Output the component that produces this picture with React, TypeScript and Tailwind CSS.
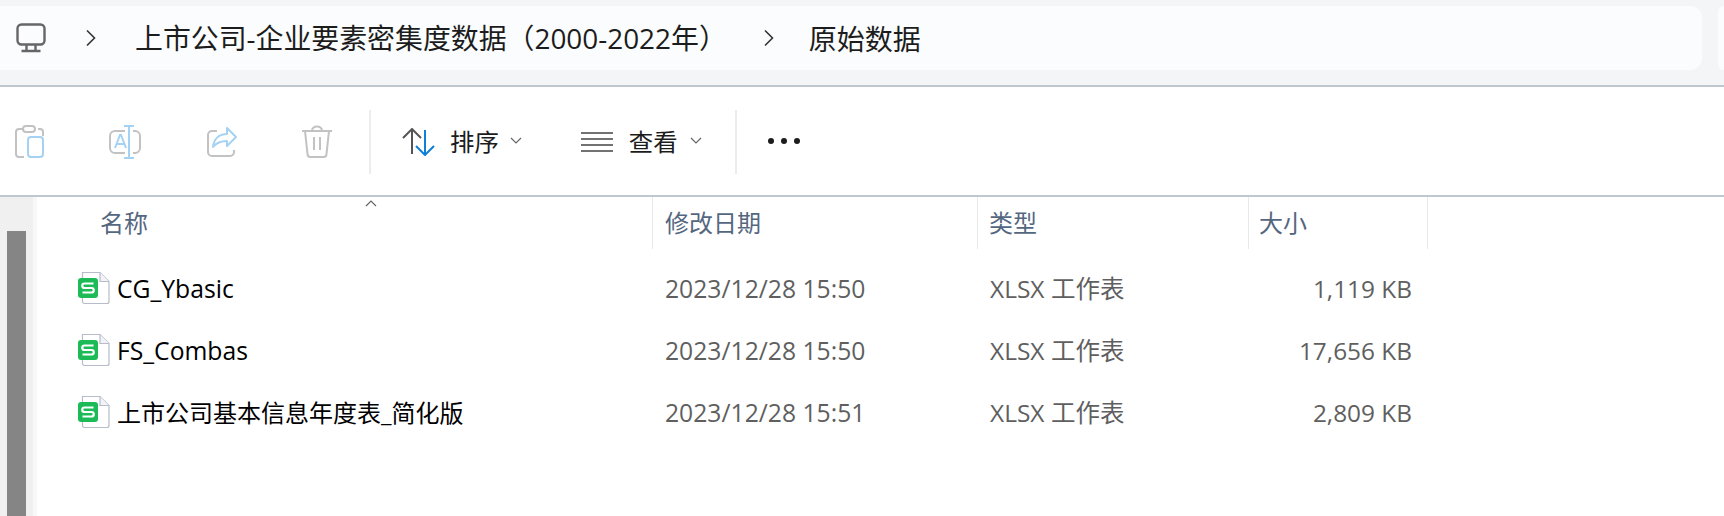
const font = { fontFamily: '"Open Sans", "Noto Sans CJK SC", sans-serif' };

const files = [
  { name: "CG_Ybasic", nameSize: "text-[24.7px]", date: "2023/12/28 15:50", size: "1,119 KB" },
  { name: "FS_Combas", nameSize: "text-[24.7px]", date: "2023/12/28 15:50", size: "17,656 KB" },
  { name: "上市公司基本信息年度表_简化版", nameSize: "text-[24px]", date: "2023/12/28 15:51", size: "2,809 KB" },
];

const Chevron = ({ className }: { className: string }) => (
  <svg viewBox="0 0 12 18" className={className} fill="none" stroke="#333" strokeWidth="1.6">
    <path d="M2 1.5 9.5 9 2 16.5" />
  </svg>
);

const Caret = ({ className }: { className: string }) => (
  <svg viewBox="0 0 12 7" className={className} fill="none" stroke="#666" strokeWidth="1.2">
    <path d="M1 1l5 5 5-5" />
  </svg>
);

const SheetIcon = () => (
  <svg viewBox="0 0 34 34" className="w-[34px] h-[34px] shrink-0 -mt-[2px]">
    <path d="M5.5 1.5H23l9 9v20a2 2 0 0 1-2 2H7.5a2 2 0 0 1-2-2z" fill="#fff" stroke="#b6bcc8" strokeWidth="1.2" />
    <path d="M23 1.5v9h9" fill="#f2f3f6" stroke="#b6bcc8" strokeWidth="1.2" />
    <rect x="1" y="7" width="20" height="20" rx="3" fill="#1dbb58" />
    <path d="M16.5 12.5H7.5a1.8 1.8 0 0 0 0 4.5h7a1.8 1.8 0 0 1 0 4.5H5.5" fill="none" stroke="#fff" strokeWidth="2.2" />
  </svg>
);

export default function App() {
  return (
    <div className="w-[1724px] h-[516px] bg-white overflow-hidden flex flex-col" style={font}>
      <div className="h-[87px] shrink-0 bg-[#f3f5f7] border-b-2 border-[#bfc7cf] pt-[6px] flex gap-[16px]">
        <div className="w-[1702px] shrink-0 h-[64px] bg-[#fbfcfe] rounded-r-xl flex items-center text-[#1c1c1c] text-[27.9px]">
          <svg viewBox="0 0 30 30" className="ml-[16px] w-[30px] h-[30px]" fill="none" stroke="#666" strokeWidth="2.4">
            <rect x="1.5" y="1.5" width="27" height="20" rx="4" />
            <path d="M10.5 22v5M19.5 22v5M5.5 28h19" />
          </svg>
          <Chevron className="ml-[39px] w-[12px] h-[18px]" />
          <span className="ml-[38px] pt-[2px] whitespace-nowrap">上市公司-企业要素密集度数据（2000-2022年）</span>
          <Chevron className="ml-[36px] w-[12px] h-[18px]" />
          <span className="ml-[34px] pt-[2px] text-[28px]">原始数据</span>
        </div>
        <div className="flex-1 h-[64px] bg-[#fbfcfe] rounded-l-xl" />
      </div>

      <div className="h-[110px] shrink-0 border-b-2 border-[#bfc7cf] pt-[2px] flex items-center text-[24px] text-[#1c1c1c]">
        <svg viewBox="0 0 30 34" className="ml-[15px] w-[30px] h-[34px]" fill="none" strokeWidth="2">
          <path d="M9 4H4a3 3 0 0 0-3 3v22a3 3 0 0 0 3 3h5M23 4h2a3 3 0 0 1 3 3v4" stroke="#c2c2c2" />
          <rect x="8" y="1" width="12" height="6" rx="3" stroke="#c2c2c2" />
          <rect x="13" y="12" width="15" height="20" rx="3" stroke="#a5d2f2" />
        </svg>
        <svg viewBox="0 0 34 34" className="ml-[63px] w-[34px] h-[34px]" fill="none" strokeWidth="2">
          <path d="M17 6H7a5 5 0 0 0-5 5v12a5 5 0 0 0 5 5h10M25 6h2a5 5 0 0 1 5 5v12a5 5 0 0 1-5 5h-2" stroke="#c2c2c2" />
          <path d="M7 23l5-13h1l5 13M9 19h8M21 1v32M16 1h10M16 33h10" stroke="#a5d2f2" />
        </svg>
        <svg viewBox="0 0 32 32" className="ml-[64px] w-[32px] h-[32px]" fill="none" strokeWidth="2">
          <path d="M11 5H6a4 4 0 0 0-4 4v17a4 4 0 0 0 4 4h18a4 4 0 0 0 4-4v-2" stroke="#c2c2c2" />
          <path d="M21 2l9 9-9 9v-5c-6 0-10 1-14 6 1-8 6-13 14-13z" stroke="#a5d2f2" strokeLinejoin="round" />
        </svg>
        <svg viewBox="0 0 32 34" className="ml-[63px] w-[32px] h-[34px]" fill="none" stroke="#c2c2c2" strokeWidth="2">
          <path d="M1 6h30M11 6c0-6 10-6 10 0M4 6l2.5 23a3 3 0 0 0 3 3h13a3 3 0 0 0 3-3L28 6M13 12v13M19 12v13" />
        </svg>
        <div className="ml-[36px] w-[2px] h-[64px] bg-[#ececec]" />
        <svg viewBox="0 0 34 28" className="ml-[30px] w-[34px] h-[28px]" fill="none" strokeWidth="2">
          <path d="M2 10 11 1l9 9M11 1v25" stroke="#555" />
          <path d="M15 18l9 9 9-9M24 27V2" stroke="#0f7fd8" />
        </svg>
        <span className="ml-[15px] text-[24.4px]">排序</span>
        <Caret className="ml-[11px] w-[12px] h-[7px] -mt-[4px]" />
        <svg viewBox="0 0 32 20" className="ml-[59px] w-[32px] h-[20px]" fill="none" stroke="#444" strokeWidth="1.6">
          <path d="M0 1h32M0 7h32M0 13h32M0 19h32" />
        </svg>
        <span className="ml-[16px] text-[24.4px]">查看</span>
        <Caret className="ml-[12px] w-[12px] h-[7px] -mt-[4px]" />
        <div className="ml-[33px] w-[2px] h-[64px] bg-[#ececec]" />
        <div className="ml-[31px] flex gap-[7px] -mt-[2px]">
          <div className="w-[6px] h-[6px] rounded-full bg-[#1c1c1c]" />
          <div className="w-[6px] h-[6px] rounded-full bg-[#1c1c1c]" />
          <div className="w-[6px] h-[6px] rounded-full bg-[#1c1c1c]" />
        </div>
      </div>

      <div className="flex-1 flex min-h-0">
        <div className="w-[33px] shrink-0 bg-[#f0f0f0] pt-[34px] pl-[7px]">
          <div className="w-[19px] h-full bg-[#858585]" />
        </div>
        <div className="w-[4px] shrink-0 bg-[#f8f8f8]" />
        <div className="flex-1 relative">
          <Caret className="absolute left-[327px] top-[3px] w-[14px] h-[7px] rotate-180" />
          <div className="grid grid-cols-[615px_325px_271px_180px] h-[52px] text-[24px] text-[#55677f] items-stretch">
            <div className="pl-[63px] flex items-center">名称</div>
            <div className="pl-[12px] border-l border-[#e8e8e8] flex items-center">修改日期</div>
            <div className="pl-[11px] border-l border-[#e8e8e8] flex items-center">类型</div>
            <div className="pl-[10px] border-x border-[#e8e8e8] flex items-center">大小</div>
          </div>
          <div className="pt-[9px] flex flex-col">
            {files.map((f) => (
              <div key={f.date + f.name} className="grid grid-cols-[615px_325px_271px_164px] h-[62px] items-center text-[24.7px] text-[#5f5f5f]">
                <div className={`pl-[40px] flex items-center gap-[6px] text-black whitespace-nowrap ${f.nameSize}`}>
                  <SheetIcon />
                  <span>{f.name}</span>
                </div>
                <div className="pl-[13px]">
                  <div className="w-[200px] whitespace-nowrap overflow-hidden">{f.date}</div>
                </div>
                <div className="pl-[13px] text-[24.5px]">XLSX 工作表</div>
                <div className="text-right text-[24.4px]">{f.size}</div>
              </div>
            ))}
          </div>
        </div>
      </div>
    </div>
  );
}
